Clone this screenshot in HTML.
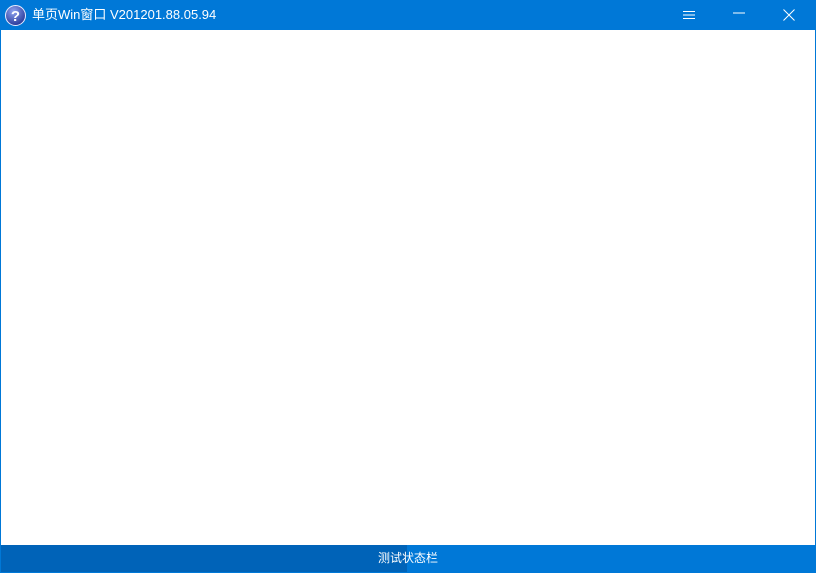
<!DOCTYPE html>
<html><head><meta charset="utf-8"><style>
body{margin:0;width:816px;height:573px;overflow:hidden;font-family:"Liberation Sans","Noto Sans CJK SC",sans-serif;background:#0078d7;position:relative}
.title{position:absolute;left:0;top:0;width:816px;height:30px;background:#0078d7;color:#fff;font-size:13px}
.title .t{position:absolute;left:32px;top:7px;line-height:16px}
.content{position:absolute;left:1px;top:30px;width:814px;height:515px;background:#fff}
.status{position:absolute;left:1px;top:545px;width:814px;height:27px;background:linear-gradient(90deg,#0063b8 0,#0063b8 406px,#0078d7 406px);color:#fff;font-size:12px;text-align:center;line-height:27px}
</style></head><body>
<div class="title">
<svg style="position:absolute;left:5px;top:5px" width="21" height="21" viewBox="0 0 21 21"><defs><radialGradient id="g" cx="40%" cy="30%" r="70%"><stop offset="0" stop-color="#8fa4f0"/><stop offset="1" stop-color="#2a3a9a"/></radialGradient></defs><circle cx="10.5" cy="10.5" r="10" fill="url(#g)" stroke="#e8ecff" stroke-width="1"/><text x="10.5" y="16" text-anchor="middle" font-family="Liberation Sans" font-weight="bold" font-size="15" fill="#fff">?</text></svg>
<div class="t">单页Win窗口 V201201.88.05.94</div>
<svg style="position:absolute;left:683px;top:10px" width="12" height="10"><path d="M0 1.5H12M0 5H12M0 8.5H12" stroke="#fff" stroke-width="1"/></svg>
<svg style="position:absolute;left:733px;top:12px" width="12" height="2"><path d="M0 1H12" stroke="#fff" stroke-width="1"/></svg>
<svg style="position:absolute;left:783px;top:9px" width="12" height="12"><path d="M0.5 0.5L11.5 11.5M11.5 0.5L0.5 11.5" stroke="#fff" stroke-width="1"/></svg>
</div>
<div class="content"></div>
<div class="status">测试状态栏</div>
</body></html>
